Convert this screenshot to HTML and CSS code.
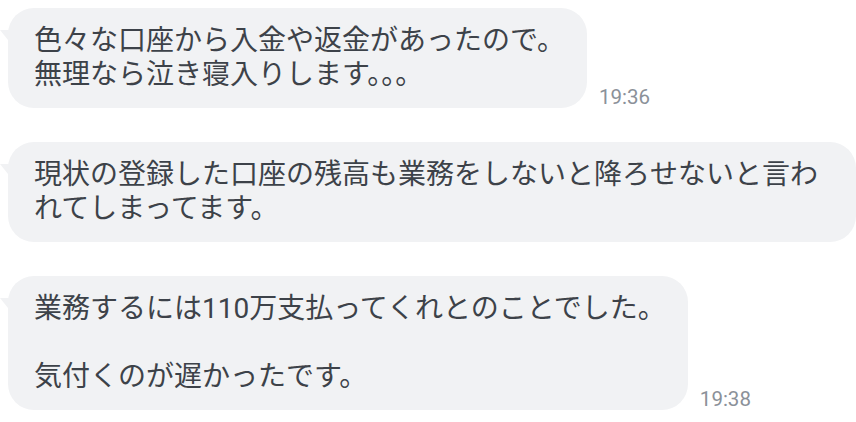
FILE: index.html
```html
<!DOCTYPE html>
<html lang="ja">
<head>
<meta charset="utf-8">
<link rel="stylesheet" href="styles.css">
</head>
<body>
<div class="chat">
  <div class="row">
    <div class="bubble">色々な口座から入金や返金があったので。<br>無理なら泣き寝入りします。。。</div>
    <div class="time">19:36</div>
  </div>
  <div class="row">
    <div class="bubble">現状の登録した口座の残高も業務をしないと降ろせないと言われてしまってます。</div>
  </div>
  <div class="row">
    <div class="bubble">業務するには110万支払ってくれとのことでした。<br><br>気付くのが遅かったです。</div>
    <div class="time">19:38</div>
  </div>
</div>
</body>
</html>
```

FILE: styles.css
```css
html, body {
  margin: 0;
  padding: 0;
  background: #ffffff;
  overflow: hidden;
}
.chat {
  display: flex;
  flex-direction: column;
  gap: 34px;
  padding: 8px 0 0 8px;
}
.row {
  display: flex;
  align-items: flex-end;
  gap: 12px;
}
.bubble {
  position: relative;
  flex-shrink: 0;
  max-width: 848px;
  box-sizing: border-box;
  background: #f1f2f4;
  border-radius: 26px;
  padding: 16px 22px 16px 26px;
  font-family: Roboto, "Noto Sans CJK JP", sans-serif;
  font-size: 28px;
  line-height: 34px;
  color: #3d4249;
}
.bubble::before {
  content: "";
  position: absolute;
  left: -8px;
  top: 22px;
  width: 0;
  height: 0;
  border-right: 12px solid #f1f2f4;
  border-bottom: 15px solid transparent;
}
.time {
  font-family: Roboto, sans-serif;
  font-size: 20.5px;
  color: #8b9199;
  line-height: 1;
  padding-bottom: 1px;
}
```
